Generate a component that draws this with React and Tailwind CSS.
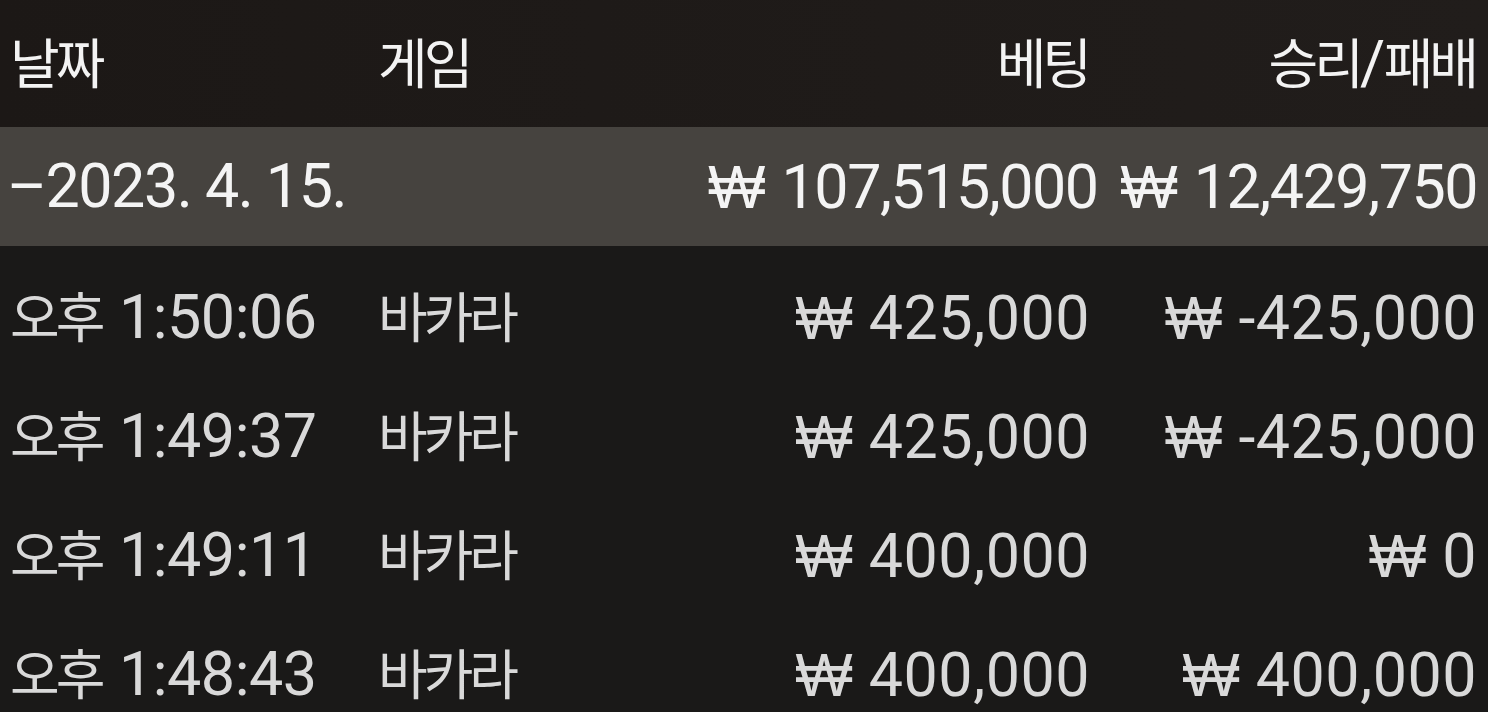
import React from 'react';

const rows = [
    { time: '1:50:06', bet: '425,000', result: '-425,000' },
    { time: '1:49:37', bet: '425,000', result: '-425,000' },
    { time: '1:49:11', bet: '400,000', result: '0' },
    { time: '1:48:43', bet: '400,000', result: '400,000' },
];

const font = { fontFamily: 'Roboto, "Noto Sans CJK KR", sans-serif' };

// korean text is narrower and smaller than the digits in the reference
const Ko = ({ children }) => (
    <span className="text-[54px] tracking-[-4px]" style={{ fontFamily: '"Noto Sans CJK KR", sans-serif' }}>{children}</span>
);

const Won = ({ value, wide }) => (
    <span className={`whitespace-nowrap ${wide ? 'tracking-[0.5px]' : ''}`}>
        <span className="mr-[16px] font-extralight tracking-normal" style={{ fontFamily: '"DejaVu Sans", sans-serif' }}>₩</span>
        {value}
    </span>
);

const App = () => {
    return (
        <div className="w-[1488px] h-[712px] overflow-hidden bg-[#1a1918] text-[61px] tracking-[-1.5px] leading-none" style={font}>
            {/* Header */}
            <div className="h-[127px] flex items-center bg-gradient-to-r from-[#1c1816] to-[#211d1b] text-[#f3f3f3]">
                <div className="w-[378px] pl-[10px]"><Ko>날짜</Ko></div>
                <div className="w-[330px]"><Ko>게임</Ko></div>
                <div className="w-[380px] text-right"><Ko>베팅</Ko></div>
                <div className="w-[387px] text-right"><Ko>승리</Ko>/<Ko>패배</Ko></div>
            </div>

            {/* Day summary */}
            <div className="h-[119px] flex items-center bg-[#46433f] text-[#f4f4f4] whitespace-nowrap">
                <div className="w-[378px] pl-[7px]">–2023. 4. 15.</div>
                <div className="w-[330px]"></div>
                <div className="w-[382px] text-right"><Won value="107,515,000" /></div>
                <div className="w-[387px] text-right"><Won value="12,429,750" /></div>
            </div>

            {/* Rows */}
            <div className="pt-[12px] flex flex-col">
                {rows.map((r) => (
                    <div key={r.time} className="h-[119px] shrink-0 flex items-center text-[#d9d9d9] whitespace-nowrap">
                        <div className="w-[378px] pl-[10px]"><Ko>오후</Ko> <span className="ml-[4px] tracking-[-0.5px]">{r.time}</span></div>
                        <div className="w-[330px]"><Ko>바카라</Ko></div>
                        <div className="w-[382px] text-right"><Won value={r.bet} wide /></div>
                        <div className="w-[387px] text-right"><Won value={r.result} wide /></div>
                    </div>
                ))}
            </div>
        </div>
    );
};

export default App;
